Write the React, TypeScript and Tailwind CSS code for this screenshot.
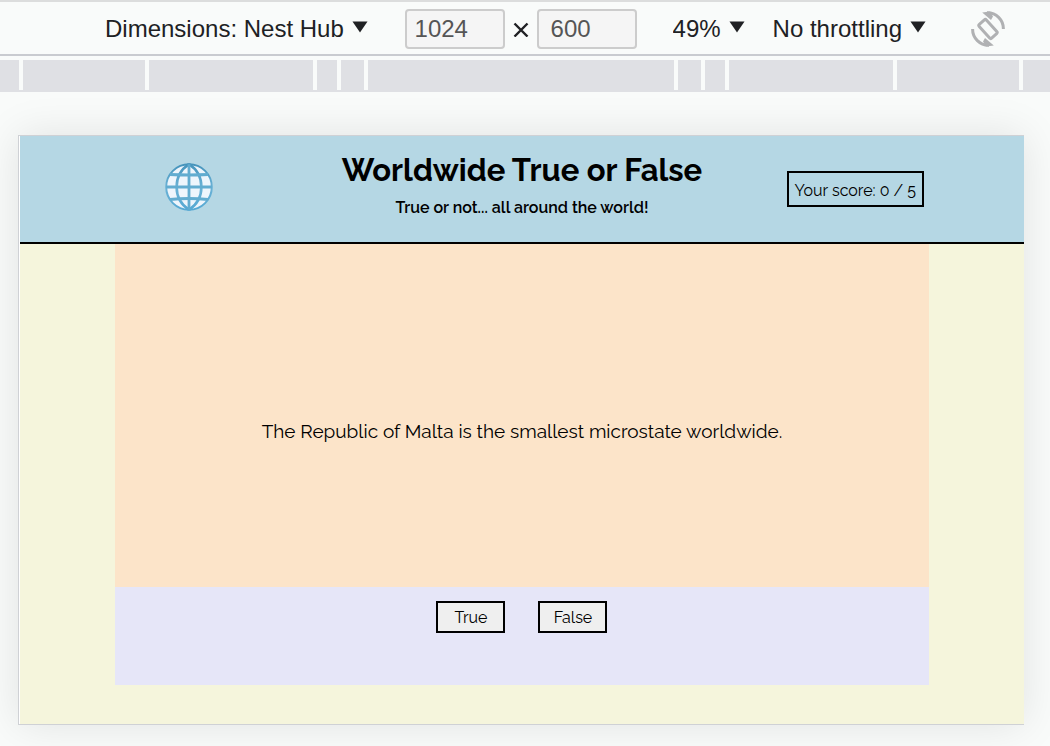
import type { ReactNode } from "react";

function Caret() {
  return (
    <svg className="pointer-events-none h-3 w-4 shrink-0" viewBox="0 0 16 12" aria-hidden="true">
      <path d="M0.5 0.5H15.5L8 11.5Z" fill="#202124" />
    </svg>
  );
}

function ToolbarSelect({ label, value, className }: { label: string; value: string; className?: string }) {
  return (
    <div className={`relative flex items-center ${className ?? ""}`}>
      <select
        aria-label={label}
        defaultValue={value}
        className="field-sizing-content appearance-none bg-transparent pr-6 text-2xl leading-8 text-[#202124] outline-none"
      >
        <option>{value}</option>
      </select>
      <span className="pointer-events-none absolute right-0 flex pb-1">
        <Caret />
      </span>
    </div>
  );
}

function RotateIcon() {
  return (
    <svg className="size-9" viewBox="0 0 36 36" fill="none" stroke="#b0b1b3" aria-hidden="true">
      <path d="M17 1.8A16 16 0 0 1 33.4 18" strokeWidth="3" />
      <path d="M12.2 1.6L20 0.4L23 5.4L21 9Z" fill="#b0b1b3" stroke="none" />
      <path d="M19 34.2A16 16 0 0 1 2.6 18" strokeWidth="3" />
      <path d="M23.8 34.4L16 35.6L13 30.6L15 27Z" fill="#b0b1b3" stroke="none" />
      <rect x="8.8" y="13.2" width="18.4" height="9.6" rx="1.4" strokeWidth="3" transform="rotate(48 18 18)" />
    </svg>
  );
}

function Globe() {
  return (
    <svg className="mt-0.5 size-12" viewBox="0 0 48 48" role="img" aria-label="Globe">
      <defs>
        <linearGradient id="line" x1="0" y1="0" x2="0" y2="1">
          <stop offset="0" stopColor="#4593bb" />
          <stop offset="0.5" stopColor="#6bb2d6" />
          <stop offset="1" stopColor="#55a8d3" />
        </linearGradient>
      </defs>
      <circle cx="24" cy="24" r="22.8" fill="#eef5fc" />
      <g fill="none" stroke="url(#line)" strokeWidth="2.6">
        <circle cx="24" cy="24" r="22.8" strokeWidth="2" />
        <path d="M24 1.2C7.5 12 7.5 36 24 46.8" />
        <path d="M24 1.2C40.5 12 40.5 36 24 46.8" />
      </g>
      <g fill="none" stroke="#62acd0" strokeWidth="2.8">
        <path d="M24 1.2V46.8M1.2 24H46.8" />
        <path d="M5 11.5Q24 12.5 43 11.5M5 36.5Q24 34.5 43 36.5" />
      </g>
    </svg>
  );
}

function AnswerButton({ children }: { children: ReactNode }) {
  return (
    <button className="h-8 w-[69px] border-2 border-black bg-[#efefef] pt-0.5 text-base leading-6 text-black">
      {children}
    </button>
  );
}

export default function App() {
  return (
    <div className="min-h-screen overflow-hidden bg-[#f9fbfa] font-['Liberation_Sans',Arial,sans-serif]">
      <div className="flex items-center border-t-2 border-b-2 border-t-[#dcdddd] border-b-[#c9cbd0] pt-[7px] pr-11 pb-[5px] pl-[105px]">
        <ToolbarSelect label="Device" value="Dimensions: Nest Hub" />
        <div className="ml-auto flex items-center">
          <input
            aria-label="Width"
            defaultValue="1024"
            className="h-10 w-[100px] rounded border-2 border-[#cccccc] bg-[#f5f5f5] px-2 text-2xl text-[#555555]"
          />
          <svg className="mx-2 size-4" viewBox="0 0 16 16" aria-hidden="true">
            <path d="M1.5 2.5L14.5 15.5M14.5 2.5L1.5 15.5" stroke="#202124" strokeWidth="2.4" />
          </svg>
          <input
            aria-label="Height"
            defaultValue="600"
            className="h-10 w-[100px] rounded border-2 border-[#cccccc] bg-[#f5f5f5] px-3 text-2xl text-[#555555]"
          />
        </div>
        <ToolbarSelect label="Zoom" value="49%" className="ml-9" />
        <ToolbarSelect label="Throttling" value="No throttling" className="ml-7" />
        <button aria-label="Rotate" className="ml-11">
          <RotateIcon />
        </button>
      </div>

      <div className="mt-1 flex h-8 gap-1 border-b-2 border-[#dfe0e4] *:basis-0 *:bg-[#dfe0e4]">
        <div className="grow-[19]" />
        <div className="grow-[122]" />
        <div className="grow-[164]" />
        <div className="grow-[20]" />
        <div className="grow-[23]" />
        <div className="grow-[306]" />
        <div className="grow-[23]" />
        <div className="grow-[20]" />
        <div className="grow-[164]" />
        <div className="grow-[122]" />
        <div className="grow-[27]" />
      </div>

      <div className="mt-[43px] mr-[26px] mb-5 ml-[18px] border-y border-l border-[#cfd1d5] bg-white pl-px shadow-[0_0_40px_rgba(0,0,0,0.1)]">
        <div className="bg-[#f5f5dc] pb-[39px] font-[Raleway,Lato,sans-serif] text-black">
          <header className="grid grid-cols-3 items-center justify-items-center border-b-2 border-black bg-[#b5d7e4] px-0.5 pt-4 pb-[22px]">
            <Globe />
            <div className="text-center whitespace-nowrap">
              <h1 className="text-[31px] leading-9 font-bold">Worldwide True or False</h1>
              <h2 className="mt-2 text-base leading-6 font-semibold">True or not... all around the world!</h2>
            </div>
            <p className="mt-1.5 border-2 border-black px-1.5 pt-1 text-base leading-7">Your score: 0 / 5</p>
          </header>
          <main className="mx-auto w-[81%]">
            <section className="flex min-h-[343px] items-center justify-center bg-[#fce4c9] pt-8">
              <p className="text-[19px]">The Republic of Malta is the smallest microstate worldwide.</p>
            </section>
            <section className="flex min-h-[98px] items-start justify-center gap-[33px] bg-[#e6e6f8] pt-3.5">
              <AnswerButton>True</AnswerButton>
              <AnswerButton>False</AnswerButton>
            </section>
          </main>
        </div>
      </div>
    </div>
  );
}
